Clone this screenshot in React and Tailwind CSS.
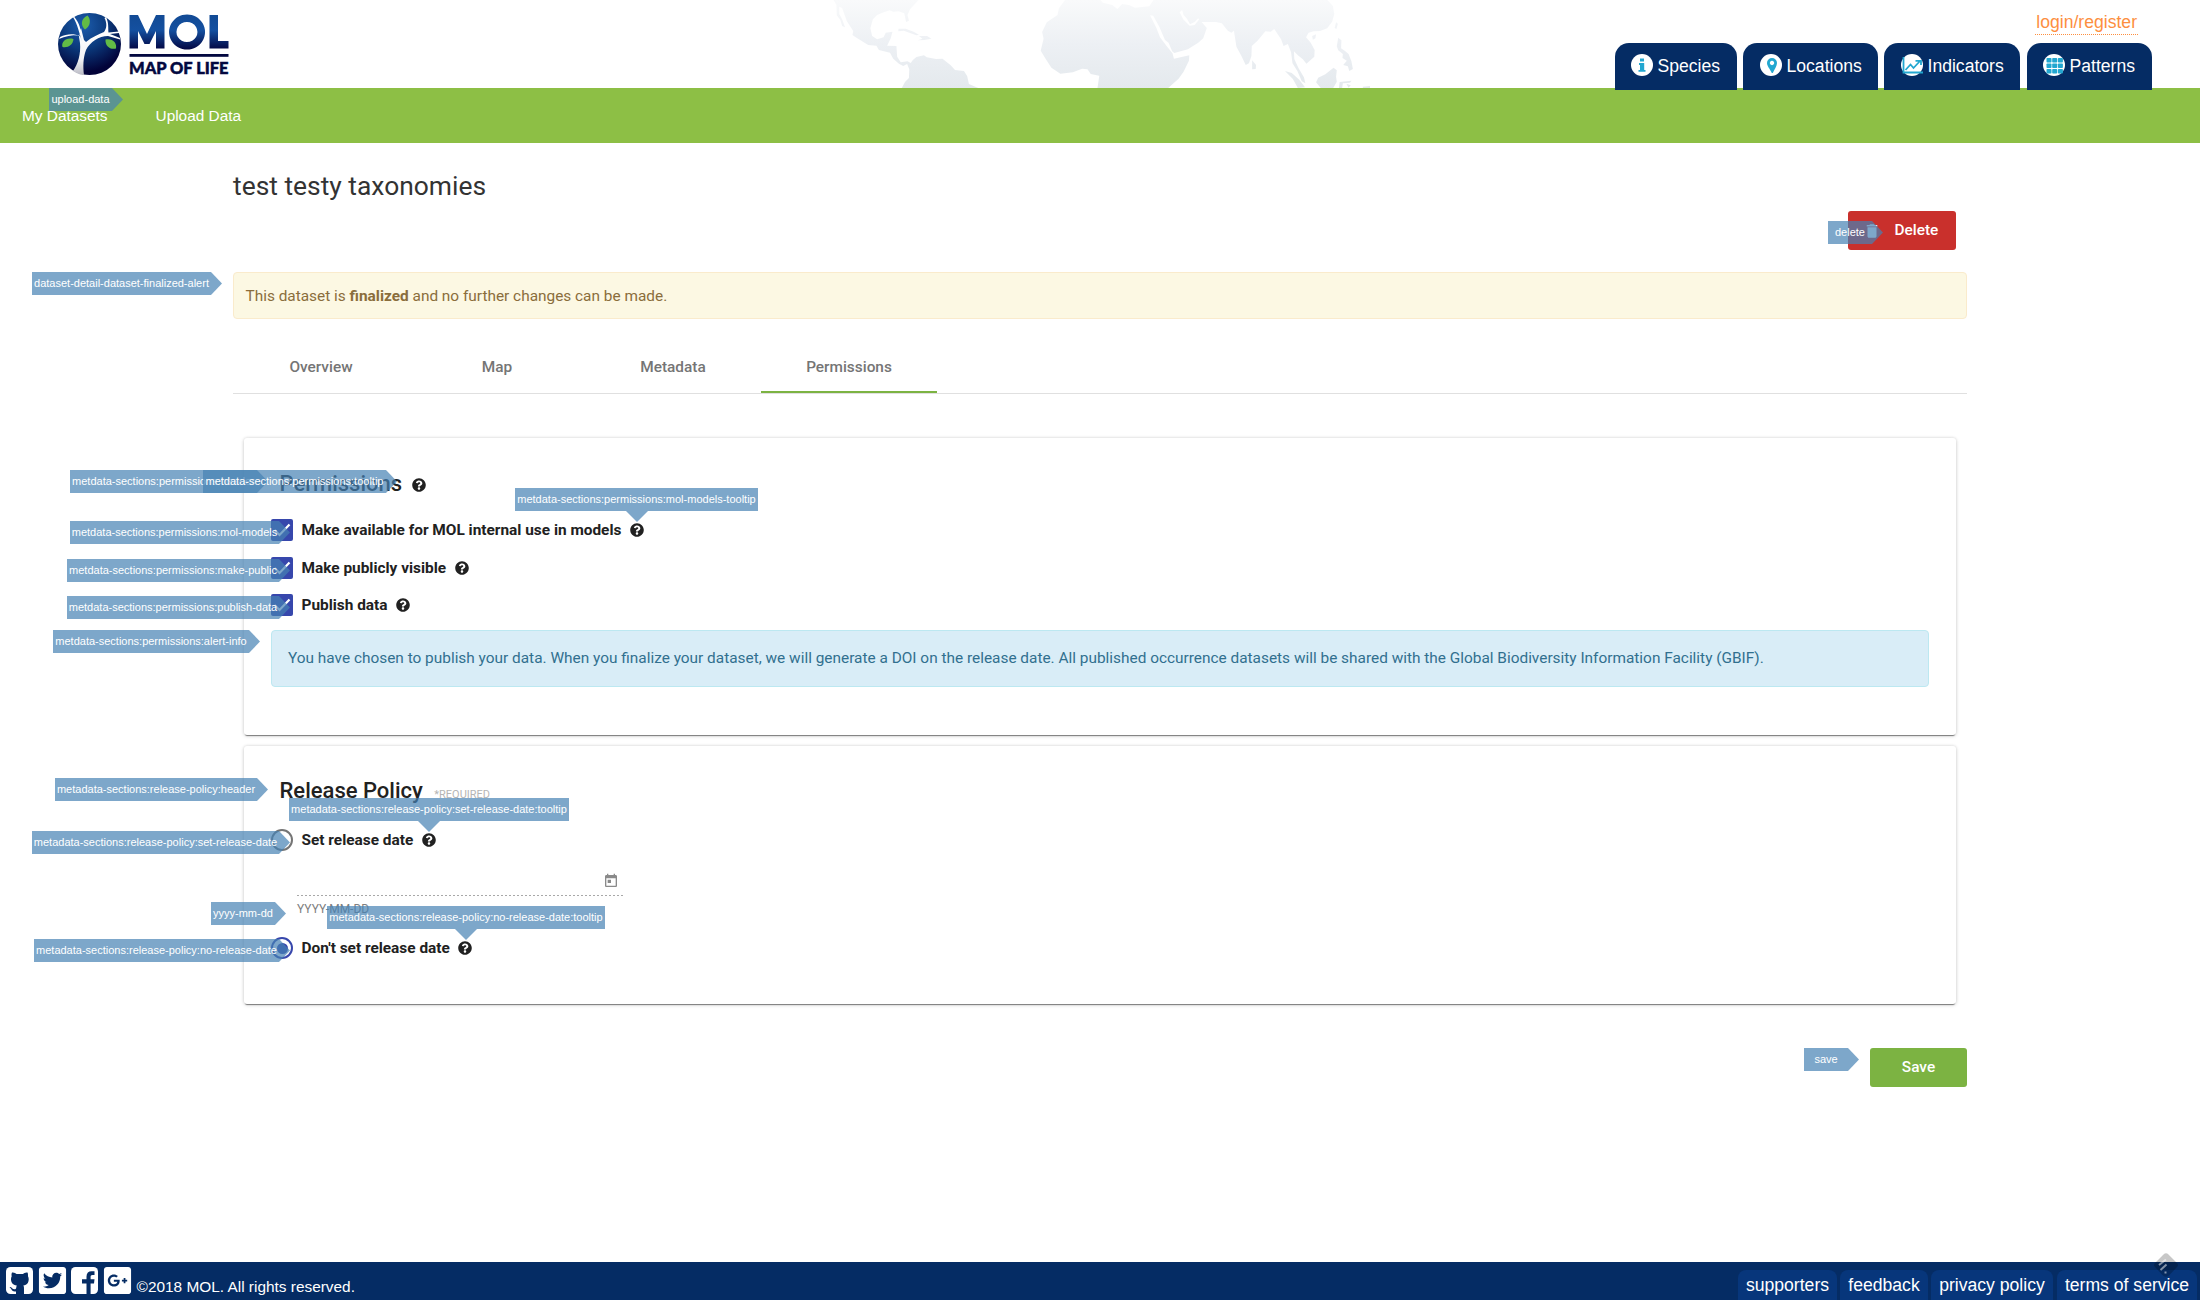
import React from "react";
import { FaTwitterSquare, FaGooglePlusSquare, FaQuestionCircle } from "react-icons/fa";

const CalloutLabel = ({ x, y, w, children, down }) => (
  <div className="absolute h-[23px]" style={{ left: x, top: y, width: w }}>
    <div className="flex h-full items-center justify-center bg-[#4682b4]/70 pb-px font-['Liberation_Sans',sans-serif] text-[11px] leading-none whitespace-nowrap text-white">
      {children}
    </div>
    {down === undefined ? (
      <svg className="absolute top-0 left-full" width="11" height="23" viewBox="0 0 11 23">
        <path d="M0 0L11 11.5L0 23Z" fill="#4682b4" fillOpacity="0.7" />
      </svg>
    ) : (
      <svg className="absolute top-full" style={{ left: down }} width="22" height="11" viewBox="0 0 22 11">
        <path d="M0 0H22L11 11Z" fill="#4682b4" fillOpacity="0.7" />
      </svg>
    )}
  </div>
);

const LABELS = [
  { x: 49, y: 88, w: 63, t: "upload-data" },
  { x: 1828, y: 221, w: 44, t: "delete" },
  { x: 32, y: 272, w: 179, t: "dataset-detail-dataset-finalized-alert" },
  { x: 70, y: 470, w: 187, t: "metdata-sections:permissions:header" },
  { x: 203, y: 470, w: 183, t: "metdata-sections:permissions:tooltip" },
  { x: 515, y: 488, w: 243, t: "metdata-sections:permissions:mol-models-tooltip", down: 111 },
  { x: 70, y: 521, w: 209, t: "metdata-sections:permissions:mol-models" },
  { x: 67, y: 559, w: 212, t: "metdata-sections:permissions:make-public" },
  { x: 67, y: 596, w: 212, t: "metdata-sections:permissions:publish-data" },
  { x: 53, y: 630, w: 196, t: "metdata-sections:permissions:alert-info" },
  { x: 55, y: 778, w: 202, t: "metadata-sections:release-policy:header" },
  { x: 289, y: 798, w: 280, t: "metadata-sections:release-policy:set-release-date:tooltip", down: 129 },
  { x: 32, y: 831, w: 247, t: "metadata-sections:release-policy:set-release-date" },
  { x: 211, y: 902, w: 64, t: "yyyy-mm-dd" },
  { x: 327, y: 906, w: 278, t: "metadata-sections:release-policy:no-release-date:tooltip", down: 128 },
  { x: 34, y: 939, w: 245, t: "metadata-sections:release-policy:no-release-date" },
  { x: 1804, y: 1048, w: 44, t: "save" },
];

const WorldMap = () => (
  <svg width="560" height="88" viewBox="0 0 1568 264" preserveAspectRatio="none">
    <defs>
      <linearGradient id="land" x1="0" y1="0" x2="0" y2="264" gradientUnits="userSpaceOnUse">
        <stop offset="0" stopColor="#f9fafb" />
        <stop offset="0.5" stopColor="#edf0f4" />
        <stop offset="1" stopColor="#e4e9ed" />
      </linearGradient>
    </defs>
    <g fill="url(#land)">
      <path d="M38 0H276L252 28L245 45L249 62L241 66L236 40L220 34L205 35L195 31L178 37L160 45L148 58L141 85L146 108L160 118L178 112L184 98L203 95L198 115L188 137L214 138L216 170L226 187L245 184L254 189L260 180L270 171L291 166L299 172L325 177L343 176L366 196L378 210L403 213L412 228L417 252L443 264H229L238 246L249 234L250 208L244 192L233 198L221 191L205 176L196 158L165 150L158 137L135 135L100 112L91 105L93 93L75 63L62 24L54 20L54 42L62 58L70 82L62 78L57 60L47 46L46 15Z" />
      <path d="M220 86L240 86L262 95L277 104L270 106L250 98L235 92L219 94ZM277 108L300 108L312 116L292 120L274 121L287 116Z" />
      <path d="M686 0H785L792 8L818 15L833 27L846 12L865 15L882 23L922 19L934 0H1421L1436 18L1440 42L1434 65L1420 85L1400 93L1382 94L1368 98L1361 112L1374 128L1385 150L1384 170L1362 191L1352 178L1338 166L1327 154L1328 177L1340 205L1355 232L1359 250L1349 244L1337 214L1323 190L1319 157L1310 132L1298 138L1291 118L1272 87L1262 95L1247 94L1225 122L1209 138L1208 168L1201 190L1192 195L1180 168L1166 140L1159 92L1152 98L1142 92L1125 70L1109 66L1066 66L1059 55L1050 65L1036 73L1028 57L1018 45L1014 30L1007 37L1017 58L1035 77L1049 75L1062 58L1083 84L1073 115L1059 128L1030 148L992 159L986 154L976 128L966 120L950 80L933 47L924 46L942 84L952 112L971 139L987 160L991 176L1034 166L1033 182L1018 215L1004 236L975 264H777L782 227L758 222L749 208L734 206L708 217L673 221L648 203L632 177L618 152L626 116L622 96L635 67L665 45L669 25Z" />
      <path d="M1210 181L1221 195L1220 207L1210 208ZM1302 213L1321 219L1342 239L1358 262L1338 264L1324 237ZM1438 203L1447 211L1445 230L1447 245L1437 264H1402L1389 247L1395 233L1415 223ZM1378 108L1389 103L1387 115L1380 119ZM1445 67L1450 71L1446 87L1441 84ZM1451 113L1460 121L1459 145L1470 153L1480 162L1488 184L1492 207L1482 213L1478 199L1465 195L1475 182L1463 174L1464 162L1451 151L1447 139ZM1455 246L1488 242L1484 248L1464 250L1462 264H1453ZM1474 251L1486 256L1480 263ZM1520 260L1540 258V264H1520Z" />
    </g>
  </svg>
);

const Logo = () => (
  <svg width="176" height="68" viewBox="56 11 176 68" className="ml-14">
    <defs>
      <radialGradient id="globe" cx="0.4" cy="0.2" r="0.75">
        <stop offset="0" stopColor="#1c5cad" />
        <stop offset="0.5" stopColor="#0b3a7c" />
        <stop offset="1" stopColor="#020339" />
      </radialGradient>
      <linearGradient id="word" x1="0" y1="14" x2="0" y2="50" gradientUnits="userSpaceOnUse">
        <stop offset="0" stopColor="#124a94" />
        <stop offset="0.45" stopColor="#1450a0" />
        <stop offset="1" stopColor="#020440" />
      </linearGradient>
      <linearGradient id="trunk" x1="0" y1="30" x2="0" y2="75" gradientUnits="userSpaceOnUse">
        <stop offset="0" stopColor="#ffffff" />
        <stop offset="0.65" stopColor="#f2f2f5" />
        <stop offset="1" stopColor="#b9bac4" />
      </linearGradient>
    </defs>
    <ellipse cx="89.5" cy="44" rx="31.5" ry="31" fill="url(#globe)" />
    <path fill="url(#trunk)" d="M74 16.5C80 24 81 30 81 35C75 34.500 66 35.500 59 39L60 37C67 33.500 74 33.500 80 36L82 41C79 33 78 25 73 17ZM106 17C109 23 108 29 108.500 32.500L119 31.500V33L110 34L120 38V39.500L108 36C99 36 90 42 86 50C83 58 83 67 84 75C80 75 76 73 73 71C78 64 81 54 80 43L79 37L81 28L84 40L86 42C92 37 99 34 104 32C107 28 107 23 104.500 18Z" />
    <path fill="#62bb46" d="M87.500 15.500C80 19 81 26 85 29.500C91 26 91 19 87.500 15.500ZM73.500 39C66 37 61 42 62.500 47C68 48 73 45 73.500 39ZM105.500 39.500C113 38 117 43 116 48.500C110 50 105 46 105.500 39.500Z" />
    <path fill="url(#word)" d="M129.500 48.500V15H138L147 34L156 15H164.500V48.500H156V31L149.500 44H144.500L138 31V48.500ZM187 14.500A18 17.500 0 1 0 187.100 14.500ZM187 22A10.500 10 0 1 1 186.900 22ZM209.500 15H218V41H228.500V48.500H209.500Z" />
    <rect x="129.500" y="54" width="99" height="2.800" fill="#030840" />
    <text x="129" y="74" textLength="99.500" lengthAdjust="spacingAndGlyphs" fill="#030840" stroke="#030840" strokeWidth="0.500" fontFamily="Lato, sans-serif" fontWeight="900" fontSize="17">MAP OF LIFE</text>
  </svg>
);

const CYAN = "#22a7d0";
const ICONS = {
  Species: <path d="M9 4.500h4v3H9ZM8 9h5.200v7H14.500v1.800H7.500V16H9v-5H8Z" fill={CYAN} />,
  Locations: <path fillRule="evenodd" d="M12 4a5 5 0 0 1 5 5c0 3-2.500 6-4.200 10h-1C10 15 7 12 7 9a5 5 0 0 1 5-5Zm0 2.800a2.200 2.200 0 1 0 .01 0Z" fill={CYAN} />,
  Indicators: <path d="M2.500 3v15.500H22M4.500 16l5-5.500 3 3.500L19 7M14.500 6.800H20V11" fill="none" stroke={CYAN} strokeWidth="1.800" />,
  Patterns: (
    <g fill={CYAN}>
      {[4, 9.5, 15].map((cy) => [3.5, 9.2, 14.9].map((cx) => <rect key={cx + "-" + cy} x={cx} y={cy} width="5" height="4.500" rx="0.800" />))}
    </g>
  ),
};

const HeaderTab = ({ name, cls }) => (
  <a className={"flex h-[47px] rounded-t-[14px] bg-[#052c64] pt-[11px] text-[17.6px] leading-[24px] text-white " + cls}>
    <svg width="22" height="22" viewBox="0 0 22 22" className="mr-[4.500px] shrink-0 overflow-visible">
      <circle cx="11" cy="11" r="11" fill="#fff" />
      {ICONS[name]}
    </svg>
    {name}
  </a>
);

const GithubSquare = () => (
  <svg className="mr-[1.700px]" width="31" height="31" viewBox="0 0 31 31">
    <rect x="2" y="2" width="27" height="27" rx="4.500" fill="#fff" />
    <path fill="#052c64" d="M8 7.500C10 7 11.500 8.300 12.500 9H19C20 8.300 21.500 7 23.500 7.500C24.200 9 24 10.500 24 11.300C25 13 25 16 23.800 18C22.800 19.700 21 20.200 19.300 20.500C20 21.500 20 22.500 20 24V29H12V26.500C9 27 8 25.500 7.200 24L5.500 22C7.500 21.500 8.500 24.500 10.500 24.300C11.500 24.300 12 24 12.200 23C12.200 22 12.400 21.200 12.800 20.500C11 20.200 9 19.700 8 18C6.700 16 6.700 13 7.700 11.300C7.400 10 7.400 9 8 7.500Z" />
  </svg>
);

const FacebookSquare = () => (
  <svg className="mr-[1.700px]" width="31" height="31" viewBox="0 0 31 31">
    <rect x="2" y="2" width="27" height="27" rx="4.500" fill="#fff" />
    <path fill="#052c64" d="M17.500 29V18.500H13V14.300H17.500V11.500C17.500 8 19.500 6.200 22.500 6.200H25.500V10H23.500C22 10 21.600 10.800 21.600 12V14.300H25.500L25 18.500H21.600V29Z" />
  </svg>
);

const Help = ({ cls = "" }) => <FaQuestionCircle className={"size-[14px] shrink-0 text-[#212121] " + cls} />;

const CheckRow = ({ children, cls }) => (
  <div className={"flex h-[22px] items-center " + cls}>
    <span className="mr-[8.500px] flex size-[22px] items-center justify-center rounded-[2px] bg-[#3747ac]">
      <svg width="22" height="22" viewBox="0 0 22 22"><path d="M3.500 11L8.500 16L18.500 5.500" fill="none" stroke="#fff" strokeWidth="2.200" /></svg>
    </span>
    <span className="mr-[8.500px] pt-[2px] text-[15.4px] font-bold text-[#212121]">{children}</span>
    <Help />
  </div>
);

const RadioRow = ({ children, checked, cls }) => (
  <div className={"flex h-[22px] items-center " + cls}>
    <span className={"mr-[8.500px] flex size-[22px] items-center justify-center rounded-full border-2 " + (checked ? "border-[#3747ac]" : "border-[#757575]")}>
      {checked && <span className="size-[11px] rounded-full bg-[#3747ac]" />}
    </span>
    <span className="mr-[8.500px] pt-[2px] text-[15.4px] font-bold text-[#212121]">{children}</span>
    <Help cls="-mt-px" />
  </div>
);

const CARD = "mx-[11px] rounded-[3px] bg-white shadow-[0_2px_1px_-1px_rgba(0,0,0,0.45),0_0_3px_rgba(0,0,0,0.12),0_1px_4px_rgba(0,0,0,0.14)] ";

export default function App() {
  return (
    <div className="relative flex h-[1300px] w-[2200px] flex-col overflow-hidden bg-white font-[Roboto,sans-serif]">
      <header className="relative flex h-[88px] shrink-0 font-['Liberation_Sans',sans-serif]">
        <div className="w-[820px] pt-[11px]"><Logo /></div>
        <WorldMap />
        <div className="relative z-10 flex grow flex-col items-end">
          <a className="mt-[11px] mr-[62px] border-b border-dotted border-[#fd8f3f] px-px pb-px text-[17.6px] leading-[22px] text-[#fd8f3f]">login/register</a>
          <nav className="mt-[8px] mr-[48px] flex">
            <HeaderTab name="Species" cls="mr-[6px] w-[122px] pl-[16px]" />
            <HeaderTab name="Locations" cls="mr-[6px] w-[135px] pl-[17px]" />
            <HeaderTab name="Indicators" cls="mr-[7px] w-[136px] pl-[17px]" />
            <HeaderTab name="Patterns" cls="w-[125px] pl-[16px]" />
          </nav>
        </div>
      </header>

      <nav className="flex h-[55px] shrink-0 gap-[48px] bg-[#8dbf45] pt-[17px] pl-[22px] font-['Liberation_Sans',sans-serif] text-[15.4px] leading-[22px] text-white">
        <a>My Datasets</a>
        <a>Upload Data</a>
      </nav>

      <main className="mx-[233px] flex grow flex-col">
        <h1 className="mt-[26px] text-[26.4px] leading-[34px] text-[#333]">test testy taxonomies</h1>
        <div className="mt-[8px] mr-[11px] flex justify-end">
          <button className="flex h-[39px] w-[108px] items-center rounded-[3px] bg-[#c9302c] pl-[15px] text-[15.4px] font-medium text-white">
            <svg width="18" height="18" viewBox="0 0 24 24" fill="#fff"><path d="M6 19c0 1.100.9 2 2 2h8c1.100 0 2-.9 2-2V7H6v12zM19 4h-3.500l-1-1h-5l-1 1H5v2h14V4z" /></svg>
            <span className="ml-[13.500px]">Delete</span>
          </button>
        </div>
        <div className="mt-[22px] flex h-[47px] items-center rounded-[4px] border border-[#faebcc] bg-[#fcf8e3] pt-[2px] pl-[11.500px] text-[15.4px] text-[#8a6d3b]">
          <p>This dataset is <b>finalized</b> and no further changes can be made.</p>
        </div>
        <div className="mt-[22px] flex h-[53px] border-b border-[#e0e0e0] text-[15.4px] font-medium text-[#757575]">
          {["Overview", "Map", "Metadata", "Permissions"].map((t) => (
            <div key={t} className={"flex h-[52px] w-[176px] items-center justify-center " + (t === "Permissions" ? "border-b-2 border-[#7cb342] pt-[4px]" : "pt-[2px]")}>{t}</div>
          ))}
        </div>

        <section className={CARD + "mt-[44px] h-[297px] pt-[32px] pl-[27px]"}>
          <div className="ml-[8.500px] flex h-[28px] items-center pb-[2px] text-[22px] font-medium text-[#212121]">Permissions<Help cls="ml-[10px] mt-[4px]" /></div>
          <CheckRow cls="mt-[21px]">Make available for MOL internal use in models</CheckRow>
          <CheckRow cls="mt-[16px]">Make publicly visible</CheckRow>
          <CheckRow cls="mt-[15px]">Publish data</CheckRow>
          <div className="mt-[14px] mr-[27px] flex h-[57px] items-center rounded-[4px] border border-[#bce8f1] bg-[#d9edf7] pl-[16px] text-[15.4px] text-[#31708f]">
            You have chosen to publish your data. When you finalize your dataset, we will generate a DOI on the release date. All published occurrence datasets will be shared with the Global Biodiversity Information Facility (GBIF).
          </div>
        </section>

        <section className={CARD + "mt-[11px] h-[258px] pt-[31px] pl-[27px]"}>
          <div className="ml-[8.500px] flex h-[28px] items-baseline text-[22px] leading-[28px] font-medium text-[#212121]">
            Release Policy<span className="ml-[11.500px] text-[11px] font-normal text-[#b5b5b5]">*REQUIRED</span>
          </div>
          <RadioRow cls="mt-[24px]">Set release date</RadioRow>
          <div className="ml-[26px] w-[326px]">
            <div className="flex h-[44px] items-end justify-end pr-[4px] pb-[6px]">
              <svg width="16" height="16" viewBox="0 0 24 24" fill="#8a8a8a"><path d="M19 3h-1V1h-2v2H8V1H6v2H5c-1.110 0-1.990.9-1.990 2L3 19c0 1.100.89 2 2 2h14c1.100 0 2-.9 2-2V5c0-1.100-.9-2-2-2zm0 16H5V8h14v11zM7 10h5v5H7z" /></svg>
            </div>
            <div className="h-px bg-[repeating-linear-gradient(90deg,#a8a8a8_0_2px,transparent_2px_4px)]" />
            <div className="mt-[5px] h-[16px] text-[12px] leading-[16px] text-[#808080]">YYYY-MM-DD</div>
          </div>
          <RadioRow checked cls="mt-[20px]">Don't set release date</RadioRow>
        </section>
        <div className="mt-[44px] flex justify-end">
          <button className="h-[39px] w-[97px] rounded-[3px] bg-[#7cb342] text-[15.4px] font-medium text-white">Save</button>
        </div>
      </main>

      <footer className="flex h-[38px] shrink-0 justify-between bg-[#052c64] font-['Liberation_Sans',sans-serif] text-white">
        <div className="flex pt-[3px] pl-[4px] text-[31px]">
          <GithubSquare /><FaTwitterSquare className="mr-[1.700px]" /><FacebookSquare /><FaGooglePlusSquare />
          <span className="mt-[12px] ml-[3.500px] text-[15.4px] leading-[20px]">©2018 MOL. All rights reserved.</span>
        </div>
        <div className="mr-[3px] flex pt-[8px] text-center text-[17.6px] leading-[30px]">
          <a className="mr-[3px] w-[99px] rounded-t-[8px] bg-[#07367b]">supporters</a>
          <a className="mr-[3px] w-[88px] rounded-t-[8px] bg-[#07367b]">feedback</a>
          <a className="mr-[4px] w-[122px] rounded-t-[8px] bg-[#07367b]">privacy policy</a>
          <a className="w-[140px] rounded-t-[8px] bg-[#07367b]">terms of service</a>
        </div>
      </footer>

      {LABELS.map((l) => (
        <CalloutLabel key={l.t} x={l.x} y={l.y} w={l.w} down={l.down}>{l.t}</CalloutLabel>
      ))}

      <svg className="absolute top-[1253px] left-[2153px]" width="26" height="24" viewBox="0 0 26 24">
        <path d="M10.500 1.500Q13 -1 15.500 1.500L24 10Q26 12 24 14L16 22.500Q13 25 10 22.500L2 14Q0 12 2 10Z" fill="#000" fillOpacity="0.220" />
        <path d="M6 12L13 6.500M7.500 17L13.500 11.500M11.500 19.500H13.500" stroke="#fff" strokeOpacity="0.500" strokeWidth="2" />
      </svg>
    </div>
  );
}
